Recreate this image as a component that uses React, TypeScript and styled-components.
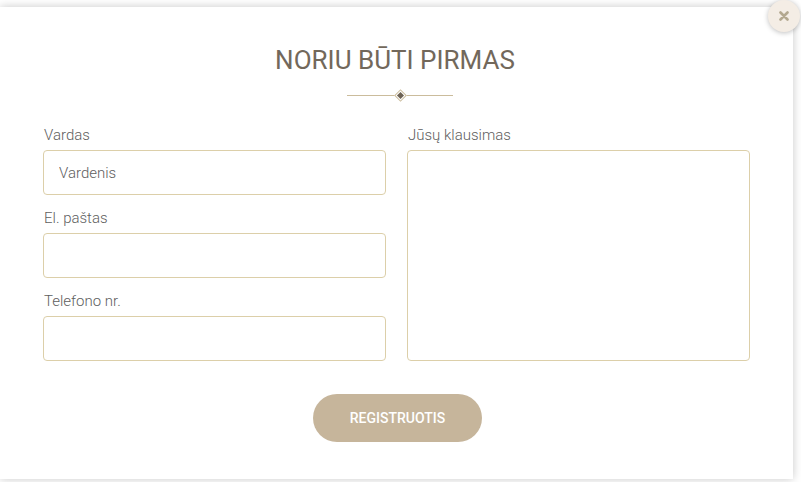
import React from "react";
import styled, { createGlobalStyle } from "styled-components";

const Global = createGlobalStyle`
  html, body { margin: 0; padding: 0; background: #ffffff; }
  body { font-family: Roboto, "Liberation Sans", sans-serif; }
  * { box-sizing: border-box; }
`;

const Page = styled.div`
  width: 801px;
  height: 482px;
  padding-top: 7px;
  overflow: hidden;
  background: #fff;
`;

const Modal = styled.div`
  position: relative;
  width: 793px;
  height: 472px;
  background: #fff;
  box-shadow: 0 0 9px rgba(0, 0, 0, 0.22);
  padding: 37px 43px 0;
  display: flex;
  flex-direction: column;
  align-items: center;
`;

const Close = styled.button`
  position: absolute;
  top: -7px;
  right: -7px;
  width: 32px;
  height: 32px;
  border-radius: 50%;
  border: none;
  background: #f4ede5;
  box-shadow: 0 1px 5px rgba(0, 0, 0, 0.25);
  display: flex;
  align-items: center;
  justify-content: center;
  padding: 0;
  cursor: pointer;
`;

const Title = styled.h2`
  margin: 0;
  font-family: Roboto, "Liberation Sans", sans-serif;
  font-weight: 400;
  font-size: 26px;
  line-height: 32px;
  color: #72685b;
  margin-left: -3px;
`;

const Divider = styled.div`
  margin-top: 12px;
  margin-left: 7px;
  width: 106px;
  height: 14px;
  display: flex;
  align-items: center;
  justify-content: center;
  position: relative;
  &::before {
    content: "";
    position: absolute;
    left: 0;
    right: 0;
    top: 50%;
    height: 1px;
    background: #cbbc9c;
  }
`;

const Diamond = styled.span`
  position: relative;
  width: 9px;
  height: 9px;
  transform: rotate(45deg);
  background: #fff;
  border: 1px solid #cbbc9c;
  display: flex;
  align-items: center;
  justify-content: center;
  &::after {
    content: "";
    width: 5px;
    height: 5px;
    background: #6d6254;
  }
`;

const Form = styled.form`
  margin-top: 24px;
  width: 100%;
  display: grid;
  grid-template-columns: 343px 343px;
  column-gap: 21px;
`;

const Column = styled.div`
  display: flex;
  flex-direction: column;
`;

const Field = styled.label`
  display: flex;
  flex-direction: column;
  margin-bottom: 14px;
  &:last-child { margin-bottom: 0; }
`;

const Label = styled.span`
  font-family: Roboto, "Liberation Sans", sans-serif;
  font-weight: 300;
  font-size: 15px;
  line-height: 18px;
  color: #5e5e5e;
  margin-bottom: 6px;
  padding-left: 1px;
`;

const Input = styled.input`
  height: 45px;
  width: 100%;
  border: 1px solid #dccfa9;
  border-radius: 4px;
  padding: 0 15px;
  font-family: Roboto, "Liberation Sans", sans-serif;
  font-weight: 300;
  font-size: 15px;
  color: #555;
  outline: none;
  background: #fff;
  &::placeholder { color: #5e5e5e; opacity: 1; }
`;

const TextArea = styled.textarea`
  height: 211px;
  width: 100%;
  border: 1px solid #dccfa9;
  border-radius: 4px;
  padding: 12px 15px;
  resize: none;
  outline: none;
  font-family: Roboto, "Liberation Sans", sans-serif;
  font-size: 15px;
  background: #fff;
`;

const Submit = styled.button`
  margin-top: 33px;
  margin-left: 2px;
  width: 169px;
  height: 48px;
  border-radius: 24px;
  border: none;
  background: #c6b59b;
  color: #fff;
  font-family: Roboto, "Liberation Sans", sans-serif;
  font-weight: 500;
  font-size: 14px;
  cursor: pointer;
`;

export default function App() {
  return (
    <Page>
      <Global />
      <Modal>
        <Close aria-label="Uždaryti">
          <svg width="10" height="10" viewBox="0 0 10 10">
            <path d="M1.5 1.5 L8.5 8.5 M8.5 1.5 L1.5 8.5" stroke="#b3a88f" strokeWidth="2.6" strokeLinecap="round" />
          </svg>
        </Close>
        <Title>NORIU BŪTI PIRMAS</Title>
        <Divider>
          <Diamond />
        </Divider>
        <Form onSubmit={(e) => e.preventDefault()}>
          <Column>
            <Field>
              <Label>Vardas</Label>
              <Input placeholder="Vardenis" />
            </Field>
            <Field>
              <Label>El. paštas</Label>
              <Input />
            </Field>
            <Field>
              <Label>Telefono nr.</Label>
              <Input />
            </Field>
          </Column>
          <Column>
            <Field>
              <Label>Jūsų klausimas</Label>
              <TextArea />
            </Field>
          </Column>
        </Form>
        <Submit type="button">REGISTRUOTIS</Submit>
      </Modal>
    </Page>
  );
}
